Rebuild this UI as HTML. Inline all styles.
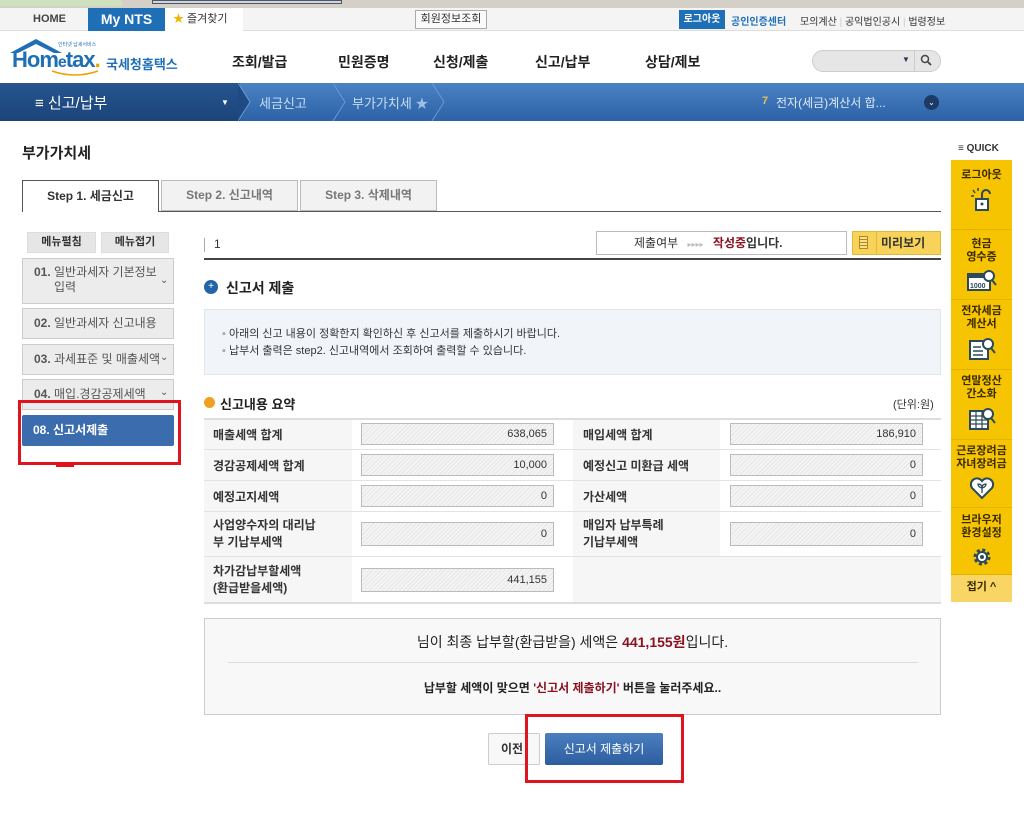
<!DOCTYPE html>
<html><head><meta charset="utf-8"><style>
*{margin:0;padding:0;box-sizing:border-box}
body{width:1024px;height:837px;position:relative;background:#fff;font-family:"Liberation Sans","Noto Sans CJK KR",sans-serif;color:#333;overflow:hidden;font-size:12px}
.a{position:absolute;white-space:nowrap}
.b{font-weight:bold}
.hatch{background:repeating-linear-gradient(135deg,#f4f4f4 0 2px,#e6e6e6 2px 3px);border:1px solid #bbb;text-align:right;padding-right:6px;font-size:11px;line-height:20px;color:#333}
.lbl{font-weight:bold;font-size:12px;color:#333}
.qi{position:absolute;left:951px;width:61px;border-bottom:1px solid #e0b400;text-align:center;font-weight:bold;font-size:11px;color:#3a2a00;line-height:13px}
.qi svg{display:block;margin:5px auto 0}
.menu{position:absolute;left:22px;width:152px;background:#ececec;border:1px solid #ccc;font-size:12px;color:#555;padding-left:11px}
</style></head><body>
<!-- browser strip -->
<div class="a" style="left:0;top:0;width:1024px;height:8px;background:#d4d0c8"></div>
<div class="a" style="left:0;top:0;width:122px;height:6px;background:#cfe2bf"></div>
<div class="a" style="left:152px;top:0;width:190px;height:4px;background:#c8d6ee;border:1px solid #555"></div>
<!-- util bar -->
<div class="a" style="left:0;top:8px;width:1024px;height:23px;background:#f4f4f4;border-bottom:1px solid #ddd"></div>
<div class="a b" style="left:33px;top:13px;font-size:11px;color:#444">HOME</div>
<div class="a b" style="left:88px;top:8px;width:77px;height:23px;background:#1f6fb6;color:#fff;font-size:14px;text-align:center;line-height:22px">My NTS</div>
<div class="a" style="left:165px;top:8px;width:78px;height:23px;background:#fff;font-size:11px;line-height:23px;padding-left:8px"><span style="color:#f2b600">★</span> 즐겨찾기</div>
<div class="a" style="left:415px;top:10px;width:72px;height:19px;border:1px solid #aaa;background:#fafafa;font-size:11px;text-align:center;line-height:17px">회원정보조회</div>
<div class="a b" style="left:679px;top:10px;width:46px;height:19px;background:#1f6fb6;color:#fff;font-size:10px;text-align:center;line-height:19px">로그아웃</div>
<div class="a b" style="left:731px;top:13px;font-size:10px;color:#1f6fb6">공인인증센터</div>
<div class="a" style="left:800px;top:13px;font-size:10px;color:#333">모의계산 <span style="color:#ccc">|</span> 공익법인공시 <span style="color:#ccc">|</span> 법령정보</div>
<!-- header -->
<svg class="a" style="left:8px;top:37px" width="70" height="20"><path d="M2 16 L28 2 L54 16 L46 16 L28 7 L10 16Z" fill="#1f6fb6"/></svg>
<div class="a b" style="left:12px;top:47px;font-size:22px;color:#1f6fb6;letter-spacing:-1px">Hom<span style="font-size:16px">e</span>tax<span style="color:#f0a000">.</span></div>
<svg class="a" style="left:50px;top:70px" width="50" height="8"><path d="M2 1 Q25 9 48 1" fill="none" stroke="#f0a000" stroke-width="1.5"/></svg>
<div class="a b" style="left:106px;top:54px;font-size:13px;color:#1f6fb6">국세청홈택스</div>
<div class="a" style="left:58px;top:41px;font-size:5px;color:#1f6fb6">인터넷 납세서비스</div>
<div class="a b" style="left:232px;top:52px;font-size:14px;color:#222">조회/발급</div>
<div class="a b" style="left:338px;top:52px;font-size:14px;color:#222">민원증명</div>
<div class="a b" style="left:433px;top:52px;font-size:14px;color:#222">신청/제출</div>
<div class="a b" style="left:535px;top:52px;font-size:14px;color:#222">신고/납부</div>
<div class="a b" style="left:645px;top:52px;font-size:14px;color:#222">상담/제보</div>
<div class="a" style="left:812px;top:50px;width:129px;height:22px;border-radius:11px;background:#e6e6e6;border:1px solid #ccc"></div>
<div class="a" style="left:914px;top:51px;width:1px;height:20px;background:#ccc"></div>
<div class="a" style="left:902px;top:55px;font-size:8px;color:#335">▼</div>
<svg class="a" style="left:920px;top:54px" width="13" height="13"><circle cx="5" cy="5" r="3.5" fill="none" stroke="#444" stroke-width="1.5"/><path d="M8 8 L11 11" stroke="#444" stroke-width="1.8"/></svg>
<!-- blue nav -->
<div class="a" style="left:0;top:83px;width:1024px;height:38px;background:linear-gradient(#4a82c4,#2c62a6)"></div>
<div class="a" style="left:0;top:83px;width:240px;height:38px;background:linear-gradient(#265590,#1b4479)"></div>
<svg class="a" style="left:238px;top:83px" width="210" height="38"><path d="M0 0 L12 19 L0 38" fill="#1f4a84" stroke="#6a9ad4"/><path d="M95 0 L107 19 L95 38 M194 0 L206 19 L194 38" fill="none" stroke="#6a9ad4"/></svg>
<div class="a" style="left:35px;top:92px;font-size:15px;color:#fff">≡ 신고/납부</div>
<div class="a" style="left:221px;top:98px;font-size:8px;color:#fff">▼</div>
<div class="a" style="left:259px;top:93px;font-size:13px;color:#c8dcf4">세금신고</div>
<div class="a" style="left:352px;top:93px;font-size:13px;color:#c8dcf4">부가가치세 <span style="color:#9fbfe6">★</span></div>
<div class="a b" style="left:762px;top:95px;font-size:11px;color:#e7c25a">7</div>
<div class="a" style="left:776px;top:94px;font-size:12px;color:#dce9f8">전자(세금)계산서 합...</div>
<div class="a" style="left:924px;top:95px;width:15px;height:15px;border-radius:50%;background:#1b3b66;color:#fff;font-size:8px;text-align:center;line-height:15px">⌄</div>
<!-- title -->
<div class="a b" style="left:22px;top:142px;font-size:15px;color:#222">부가가치세</div>
<!-- quick -->
<div class="a b" style="left:958px;top:143px;font-size:10px;color:#333">≡ QUICK</div>
<div class="a" style="left:951px;top:160px;width:61px;height:442px;background:#f6c400"></div>
<div class="qi" style="top:160px;height:70px;padding-top:9px">로그아웃
<svg width="28" height="26" viewBox="0 0 28 26"><path d="M14 12 V7 a4 4 0 0 1 8 0" fill="none" stroke="#2c4a5c" stroke-width="2"/><rect x="8" y="12" width="12" height="11" fill="#fff" stroke="#2c4a5c" stroke-width="2"/><circle cx="14" cy="17" r="1.5" fill="#2c4a5c"/><path d="M3 9 h3 M5 3 l2 3 M10 1 v3" stroke="#2c4a5c" stroke-width="1.5"/></svg></div>
<div class="qi" style="top:230px;height:70px;padding-top:8px">현금<br>영수증
<svg width="32" height="24" viewBox="0 0 32 24"><rect x="2" y="5" width="22" height="16" fill="#fff" stroke="#2c4a5c" stroke-width="2"/><rect x="2" y="5" width="22" height="4" fill="#2c4a5c"/><text x="4" y="19" font-size="7" fill="#2c4a5c" font-family="Liberation Sans">1000</text><circle cx="23" cy="7" r="5" fill="#fff" stroke="#2c4a5c" stroke-width="2"/><path d="M26 11 L30 16" stroke="#2c4a5c" stroke-width="2"/></svg></div>
<div class="qi" style="top:300px;height:70px;padding-top:5px">전자세금<br>계산서
<svg width="32" height="26" viewBox="0 0 32 26"><rect x="4" y="5" width="18" height="18" fill="#fff" stroke="#2c4a5c" stroke-width="2"/><path d="M7 11h8 M7 15h10 M7 19h10" stroke="#2c4a5c" stroke-width="1.5"/><circle cx="22" cy="8" r="5" fill="#fff" stroke="#2c4a5c" stroke-width="2"/><path d="M25 12 L29 17" stroke="#2c4a5c" stroke-width="2"/></svg></div>
<div class="qi" style="top:370px;height:70px;padding-top:5px">연말정산<br>간소화
<svg width="32" height="26" viewBox="0 0 32 26"><rect x="4" y="5" width="18" height="18" fill="#fff" stroke="#2c4a5c" stroke-width="2"/><path d="M4 10h18 M4 14h18 M4 18h18 M10 5v18 M16 5v18" stroke="#2c4a5c" stroke-width="1.2"/><circle cx="22" cy="8" r="5" fill="#fff" stroke="#2c4a5c" stroke-width="2"/><path d="M25 12 L29 17" stroke="#2c4a5c" stroke-width="2"/></svg></div>
<div class="qi" style="top:440px;height:68px;padding-top:5px">근로장려금<br>자녀장려금
<svg width="28" height="24" viewBox="0 0 28 24"><path d="M14 22 L4 12 a5.5 5.5 0 0 1 10 -7 a5.5 5.5 0 0 1 10 7 Z" fill="#fff" stroke="#2c4a5c" stroke-width="2"/><path d="M14 17 v-6 M14 12 q-4 -1 -4 -4 q4 0 4 4 q4 -1 4 -4 q-4 0 -4 4" fill="none" stroke="#2c4a5c" stroke-width="1.3"/></svg></div>
<div class="qi" style="top:508px;height:67px;padding-top:6px">브라우저<br>환경설정
<svg width="24" height="24" viewBox="0 0 24 24"><circle cx="12" cy="12" r="7" fill="none" stroke="#2c4a5c" stroke-width="3" stroke-dasharray="3 2.5"/><circle cx="12" cy="12" r="5" fill="#fff" stroke="#2c4a5c" stroke-width="2"/><circle cx="12" cy="12" r="2" fill="#2c4a5c"/></svg></div>
<div class="qi" style="top:575px;height:27px;background:#f9d566;line-height:24px;border:none">접기 ^</div>
<!-- tabs -->
<div class="a" style="left:22px;top:211px;width:919px;height:1px;background:#555"></div>
<div class="a b" style="left:22px;top:180px;width:137px;height:32px;background:#fff;border:1px solid #555;border-bottom:none;text-align:center;line-height:30px;font-size:12px;color:#333">Step 1. 세금신고</div>
<div class="a b" style="left:161px;top:180px;width:137px;height:31px;background:#f2f2f2;border:1px solid #bbb;text-align:center;line-height:29px;font-size:12px;color:#777">Step 2. 신고내역</div>
<div class="a b" style="left:300px;top:180px;width:137px;height:31px;background:#f2f2f2;border:1px solid #bbb;text-align:center;line-height:29px;font-size:12px;color:#777">Step 3. 삭제내역</div>
<!-- left menu -->
<div class="a b" style="left:27px;top:232px;width:69px;height:21px;background:#e6e6e6;border:1px solid #ddd;text-align:center;line-height:19px;font-size:11px">메뉴펼침</div>
<div class="a b" style="left:101px;top:232px;width:68px;height:21px;background:#e6e6e6;border:1px solid #ddd;text-align:center;line-height:19px;font-size:11px">메뉴접기</div>
<div class="menu" style="top:258px;height:46px;padding-top:6px;line-height:15px"><b>01.</b> 일반과세자 기본정보<br>&nbsp;&nbsp;&nbsp;&nbsp;&nbsp;&nbsp;입력</div>
<div class="menu" style="top:308px;height:31px;line-height:29px"><b>02.</b> 일반과세자 신고내용</div>
<div class="menu" style="top:344px;height:31px;line-height:29px;overflow:hidden"><b>03.</b> 과세표준 및 매출세액</div>
<div class="menu" style="top:379px;height:31px;line-height:29px;overflow:hidden"><b>04.</b> 매입.경감공제세액</div>
<div class="a" style="left:160px;top:259px;width:14px;height:150px;font-size:10px;color:#555;line-height:12px">
<div style="position:absolute;top:16px">⌄</div><div style="position:absolute;top:93px">⌄</div><div style="position:absolute;top:128px">⌄</div></div>
<div class="a b" style="left:22px;top:415px;width:152px;height:31px;background:#3a6cae;color:#fff;font-size:12px;line-height:31px;padding-left:11px;border-radius:2px">08. 신고서제출</div>
<div class="a" style="left:18px;top:400px;width:163px;height:65px;border:3px solid #e0141e"></div>
<div class="a" style="left:56px;top:462px;width:18px;height:5px;background:#e0141e"></div>
<!-- content top -->
<div class="a" style="left:204px;top:238px;width:1px;height:14px;background:#aaa"></div>
<div class="a" style="left:214px;top:237px;font-size:12px">1</div>
<div class="a" style="left:204px;top:258px;width:737px;height:2px;background:#444"></div>
<div class="a" style="left:596px;top:231px;width:251px;height:24px;border:1px solid #bbb;font-size:12px;line-height:22px;padding-left:37px">제출여부 <span style="color:#bbb;font-size:8px;margin:0 6px">▸▸▸▸</span> <b style="color:#8b1020">작성중</b><b>입니다.</b></div>
<div class="a b" style="left:852px;top:231px;width:89px;height:24px;background:#f7d35a;border:1px solid #e0b840;font-size:12px;line-height:22px;padding-left:28px">미리보기</div>
<div class="a" style="left:859px;top:236px;width:9px;height:13px;border:1px solid #b08a20;background:repeating-linear-gradient(#f9e08a 0 2px,#b08a20 2px 3px)"></div>
<div class="a" style="left:876px;top:232px;width:1px;height:22px;background:#e0b840"></div>
<div class="a" style="left:204px;top:280px;width:14px;height:14px;border-radius:50%;background:#2463a6;color:#fff;font-size:10px;text-align:center;line-height:13px">+</div>
<div class="a b" style="left:226px;top:278px;font-size:14px;color:#222">신고서 제출</div>
<div class="a" style="left:204px;top:309px;width:737px;height:66px;background:#f1f5fa;border:1px solid #e0e6ee"></div>
<div class="a" style="left:222px;top:326px;font-size:11px;color:#333;line-height:17px"><span style="color:#aaa">▪</span> 아래의 신고 내용이 정확한지 확인하신 후 신고서를 제출하시기 바랍니다.<br><span style="color:#aaa">▪</span> 납부서 출력은 step2. 신고내역에서 조회하여 출력할 수 있습니다.</div>
<div class="a" style="left:204px;top:397px;width:11px;height:11px;border-radius:50%;background:#f0a020"></div>
<div class="a b" style="left:220px;top:394px;font-size:13px;color:#222">신고내용 요약</div>
<div class="a" style="left:893px;top:396px;font-size:11px;color:#333">(단위:원)</div>
<!-- table -->
<div class="a" style="left:204px;top:418px;width:737px;height:186px;border-top:2px solid #ddd;border-bottom:2px solid #ddd;background:#f6f6f6"></div>
<div class="a" style="left:352px;top:420px;width:221px;height:182px;background:#fff"></div>
<div class="a" style="left:720px;top:420px;width:221px;height:136px;background:#fff"></div>
<div class="a" style="left:204px;top:449px;width:737px;height:1px;background:#e2e2e2"></div>
<div class="a" style="left:204px;top:480px;width:737px;height:1px;background:#e2e2e2"></div>
<div class="a" style="left:204px;top:511px;width:737px;height:1px;background:#e2e2e2"></div>
<div class="a" style="left:204px;top:556px;width:737px;height:1px;background:#e2e2e2"></div>
<div class="a lbl" style="left:213px;top:426px">매출세액 합계</div>
<div class="a lbl" style="left:213px;top:457px">경감공제세액 합계</div>
<div class="a lbl" style="left:213px;top:488px">예정고지세액</div>
<div class="a lbl" style="left:213px;top:517px;line-height:17px">사업양수자의 대리납<br>부 기납부세액</div>
<div class="a lbl" style="left:213px;top:563px;line-height:17px">차가감납부할세액<br>(환급받을세액)</div>
<div class="a lbl" style="left:583px;top:426px">매입세액 합계</div>
<div class="a lbl" style="left:583px;top:457px">예정신고 미환급 세액</div>
<div class="a lbl" style="left:583px;top:488px">가산세액</div>
<div class="a lbl" style="left:583px;top:517px;line-height:17px">매입자 납부특례<br>기납부세액</div>
<div class="a hatch" style="left:361px;top:423px;width:193px;height:22px">638,065</div>
<div class="a hatch" style="left:361px;top:454px;width:193px;height:22px">10,000</div>
<div class="a hatch" style="left:361px;top:485px;width:193px;height:22px">0</div>
<div class="a hatch" style="left:361px;top:522px;width:193px;height:24px;line-height:22px">0</div>
<div class="a hatch" style="left:361px;top:568px;width:193px;height:24px;line-height:22px">441,155</div>
<div class="a hatch" style="left:730px;top:423px;width:193px;height:22px">186,910</div>
<div class="a hatch" style="left:730px;top:454px;width:193px;height:22px">0</div>
<div class="a hatch" style="left:730px;top:485px;width:193px;height:22px">0</div>
<div class="a hatch" style="left:730px;top:522px;width:193px;height:24px;line-height:22px">0</div>
<!-- final box -->
<div class="a" style="left:204px;top:618px;width:737px;height:97px;background:#f8f8f8;border:1px solid #ccc"></div>
<div class="a" style="left:228px;top:662px;width:690px;height:1px;background:#ddd"></div>
<div class="a" style="left:204px;top:632px;width:737px;text-align:center;font-size:14px;color:#222">님이 최종 납부할(환급받을) 세액은 <b style="color:#8b1020">441,155원</b>입니다.</div>
<div class="a b" style="left:204px;top:679px;width:737px;text-align:center;font-size:12px;color:#222">납부할 세액이 맞으면 <span style="color:#8b1020">'신고서 제출하기'</span> 버튼을 눌러주세요..</div>
<div class="a b" style="left:488px;top:733px;width:52px;height:32px;background:#f8f8f8;border:1px solid #ccc;border-radius:2px;font-size:12px;line-height:30px;padding-left:12px">이전</div>
<div class="a" style="left:545px;top:733px;width:118px;height:32px;background:linear-gradient(#4a7fc0,#2d5d9e);border-radius:2px;color:#fff;font-size:12px;text-align:center;line-height:32px">신고서 제출하기</div>
<div class="a" style="left:525px;top:714px;width:159px;height:69px;border:3px solid #e0141e"></div>
</body></html>
